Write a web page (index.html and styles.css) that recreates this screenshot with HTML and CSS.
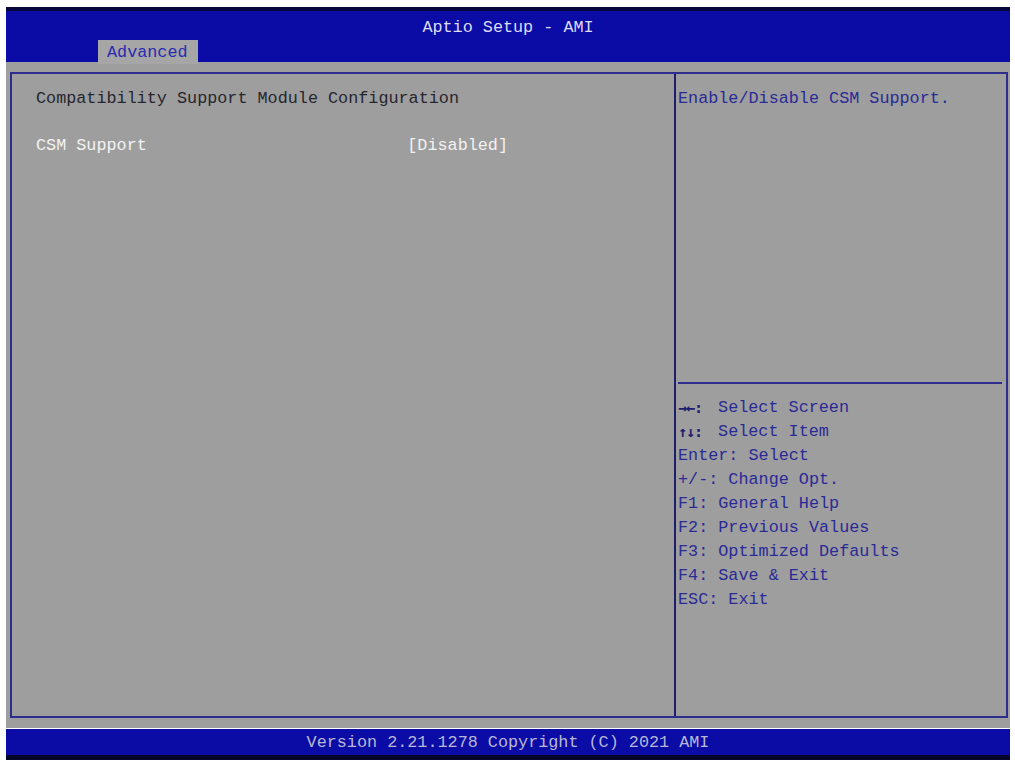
FILE: index.html
```html
<!DOCTYPE html>
<html>
<head>
    <meta charset="utf-8">
    <link rel="stylesheet" href="styles.css">
</head>
<body>
    <div class="screen">
        <div class="topbar">
            <div class="title">Aptio Setup - AMI</div>
            <div class="tabs">
                <span class="tab">Advanced</span>
            </div>
        </div>

        <div class="main">
            <div class="frame">
                <div class="left">
                    <div class="heading">Compatibility Support Module Configuration</div>
                    <div class="row">
                        <span class="label">CSM Support</span>
                        <span class="value">[Disabled]</span>
                    </div>
                </div>
                <div class="right">
                    <div class="help">Enable/Disable CSM Support.</div>
                    <div class="keys">
                        <div><span class="key">&rarr;&larr;:</span> Select Screen</div>
                        <div><span class="key">&uarr;&darr;:</span> Select Item</div>
                        <div>Enter: Select</div>
                        <div>+/-: Change Opt.</div>
                        <div>F1: General Help</div>
                        <div>F2: Previous Values</div>
                        <div>F3: Optimized Defaults</div>
                        <div>F4: Save &amp; Exit</div>
                        <div>ESC: Exit</div>
                    </div>
                </div>
            </div>
        </div>

        <div class="footer">Version 2.21.1278 Copyright (C) 2021 AMI</div>
    </div>
</body>
</html>
```

FILE: styles.css
```css
html {
    background: #ffffff;
}

body {
    margin: 0;
    font-family: "Liberation Mono", "DejaVu Sans Mono", monospace;
    font-size: 16.8px;
    line-height: 24px;
}

.screen {
    margin: 7px 0 0 6px;
    width: 1004px;
}

/* верхняя синяя полоса */
.topbar {
    height: 51px;
    background: #0b0ba6;
    border-top: 4px solid #07073a;
    display: flex;
    flex-direction: column;
    justify-content: space-between;
}

.title {
    text-align: center;
    color: #dcdcf4;
    padding-top: 5px;
}

.tabs {
    padding-left: 92px;
    display: flex;
}

.tab {
    background: #a6a6a6;
    color: #2b2bb0;
    padding: 1px 10px 0 9px;
    height: 23px;
    display: block;
}

/* серое поле */
.main {
    background: #9e9e9e;
    padding: 10px 2px 10px 4px;
}

.frame {
    height: 642px;
    border: 2px solid #2d2d8e;
    display: grid;
    grid-template-columns: 664px 1fr;
}

.left {
    padding: 13px 0 0 24px;
    border-right: 2px solid #1e1e6a;
}

.heading {
    color: #26262e;
}

.row {
    display: flex;
    margin-top: 23px;
    width: 472px;
    justify-content: space-between;
    color: #f2f2f2;
}

.right {
    display: flex;
    flex-direction: column;
    color: #2a2a96;
    padding: 13px 4px 0 2px;
}

.help {
    height: 295px;
    border-bottom: 2px solid #2d2d8e;
}

.keys {
    padding-top: 12px;
}

.keys div {
    height: 24px;
}

.key {
    display: inline-block;
    width: 30px;
    line-height: 24px;
    vertical-align: top;
    color: #1c1c6c;
    font-family: "DejaVu Sans Mono", monospace;
    font-weight: bold;
    font-size: 15px;
    letter-spacing: -1px;
}

/* нижняя полоса */
.footer {
    margin-top: 1px;
    height: 26px;
    line-height: 28px;
    background: #0b0ba6;
    border-bottom: 5px solid #06062a;
    color: #b8b8d6;
    text-align: center;
}
```
